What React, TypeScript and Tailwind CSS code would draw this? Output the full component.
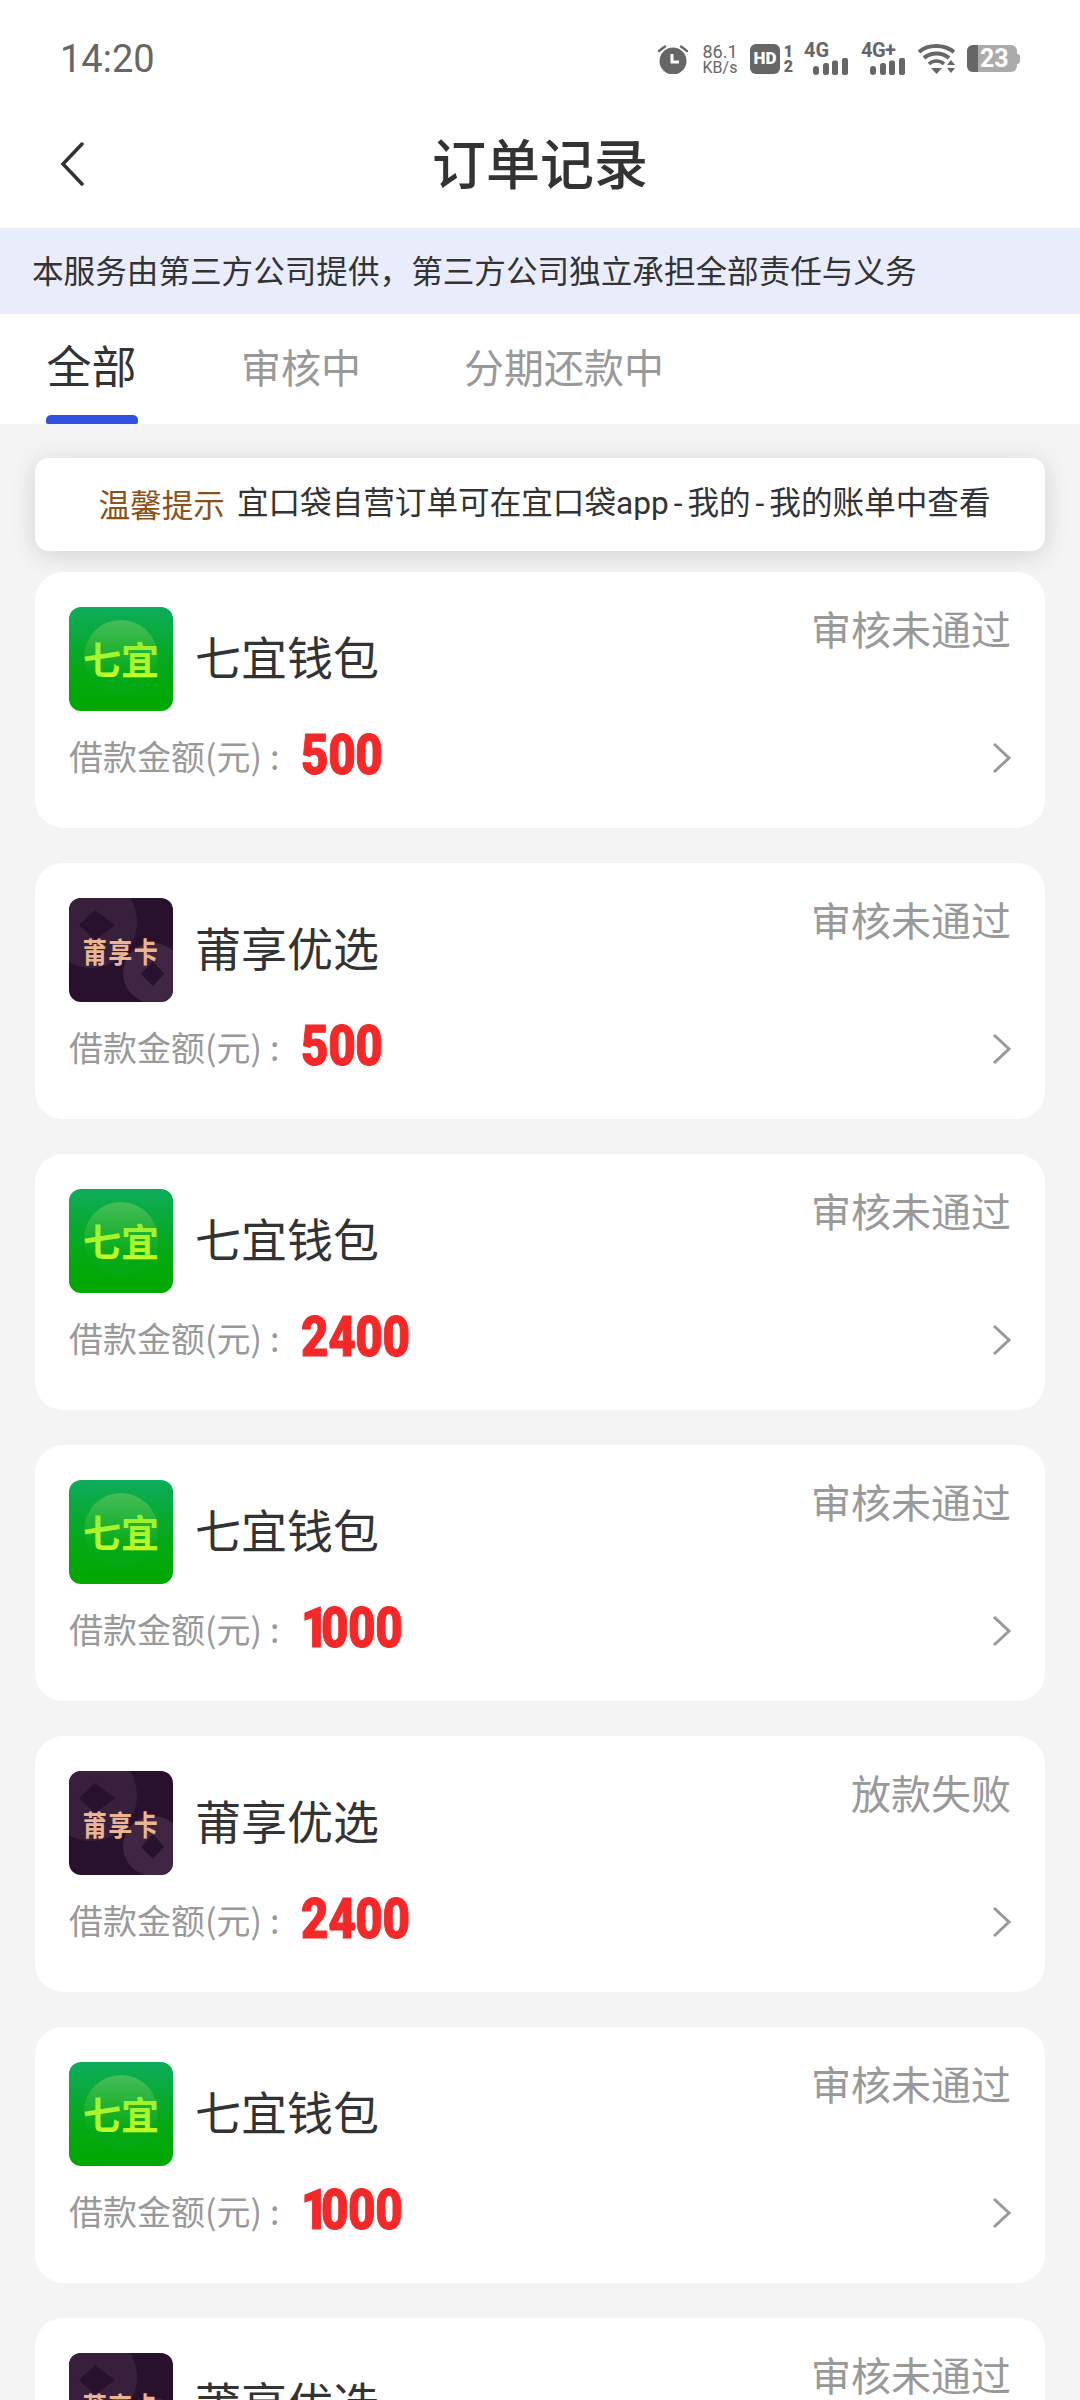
const orders = [
  { name: "七宜钱包", logo: "green", amount: "500", status: "审核未通过" },
  { name: "莆享优选", logo: "dark", amount: "500", status: "审核未通过" },
  { name: "七宜钱包", logo: "green", amount: "2400", status: "审核未通过" },
  { name: "七宜钱包", logo: "green", amount: "1000", status: "审核未通过" },
  { name: "莆享优选", logo: "dark", amount: "2400", status: "放款失败" },
  { name: "七宜钱包", logo: "green", amount: "1000", status: "审核未通过" },
  { name: "莆享优选", logo: "dark", amount: "1000", status: "审核未通过" },
];

function GreenLogo() {
  return (
    <svg width="104" height="104" viewBox="0 0 104 104" className="shrink-0">
      <defs>
        <linearGradient id="greenBg" x1="0" y1="0" x2="0" y2="1">
          <stop offset="0" stopColor="#0dac5c" />
          <stop offset="0.6" stopColor="#04a914" />
          <stop offset="1" stopColor="#00a800" />
        </linearGradient>
        <linearGradient id="greenCircle" x1="0" y1="0" x2="0" y2="1">
          <stop offset="0" stopColor="#45bd5a" />
          <stop offset="0.75" stopColor="#04a914" />
        </linearGradient>
        <linearGradient id="greenText" x1="0" y1="0" x2="0" y2="1">
          <stop offset="0" stopColor="#86ec34" />
          <stop offset="1" stopColor="#ccff22" />
        </linearGradient>
      </defs>
      <rect width="104" height="104" rx="12" fill="url(#greenBg)" />
      <circle cx="52" cy="50" r="37" fill="url(#greenCircle)" />
      <text x="52" y="67" textAnchor="middle" fontSize="38" fontWeight="700" fill="url(#greenText)" fontFamily="'Noto Sans CJK SC', sans-serif">
        七宜
      </text>
    </svg>
  );
}

function DarkLogo() {
  return (
    <svg width="104" height="104" viewBox="0 0 104 104" className="shrink-0">
      <defs>
        <clipPath id="darkClip">
          <rect width="104" height="104" rx="12" />
        </clipPath>
      </defs>
      <g clipPath="url(#darkClip)">
        <rect width="104" height="104" fill="#28112c" />
        <circle cx="22" cy="24" r="46" fill="#38203c" />
        <circle cx="84" cy="75" r="30" fill="#3f2642" />
        <path d="M26 12 L46 27 L26 42 L10 27 Z" fill="#28112c" />
        <path d="M84 63 L95 76 L84 88 L72 76 Z" fill="#28112c" />
      </g>
      <text transform="translate(52 65) scale(1 1.2)" textAnchor="middle" fontSize="24" letterSpacing="1.5" fontWeight="700" fill="#eab592" fontFamily="'Noto Sans CJK SC', sans-serif">
        莆享卡
      </text>
    </svg>
  );
}

function Bars() {
  return (
    <svg width="35" height="17" viewBox="0 0 35 17" fill="#666">
      <rect x="0" y="8" width="6" height="9" rx="3" />
      <rect x="10" y="5" width="6" height="12" rx="2.5" />
      <rect x="19" y="2.5" width="6" height="14.5" rx="2" />
      <rect x="29" y="0" width="6" height="17" rx="2" />
    </svg>
  );
}

function StatusBar() {
  return (
    <div className="flex h-[114px] items-center justify-between pt-[3px] pr-[60px] pl-[60px]">
      <span className="mt-[1px] font-['Roboto'] text-[38px] leading-none text-[#666666]">14:20</span>
      <div className="flex items-center text-[#666666]">
        <svg width="32" height="30" viewBox="0 0 32 30">
          <circle cx="16" cy="17" r="13.5" fill="#666" />
          <path d="M2 7 L8 2.5 M30 7 L24 2.5" stroke="#666" strokeWidth="2.5" strokeLinecap="round" />
          <path d="M15 10 V18 H22" stroke="#fff" strokeWidth="3" fill="none" />
        </svg>
        <div className="ml-[12px] flex w-[38px] flex-col items-center font-['Roboto'] leading-none">
          <span className="text-[18px] leading-[17px]">86.1</span>
          <span className="text-[16px] leading-[15px]">KB/s</span>
        </div>
        <div className="ml-[11px] flex h-[30px] w-[30px] items-center justify-center rounded-[6px] bg-[#666666] font-['Roboto'] text-[17px] font-black text-white">
          HD
        </div>
        <div className="ml-[3px] flex w-[11px] flex-col items-center font-['Roboto'] text-[16px] leading-[15px] font-black">
          <span>1</span>
          <span>2</span>
        </div>
        <div className="ml-[10px] flex w-[44px] flex-col">
          <span className="font-['Roboto'] text-[20px] leading-[15px] font-bold">4G</span>
          <div className="ml-[9px] flex">
            <Bars />
          </div>
        </div>
        <div className="ml-[13px] flex w-[44px] flex-col">
          <span className="font-['Roboto'] text-[20px] leading-[15px] font-bold tracking-[-0.5px]">4G+</span>
          <div className="ml-[9px] flex">
            <Bars />
          </div>
        </div>
        <svg width="38" height="30" viewBox="0 0 38 30" className="ml-[13px]">
          <path d="M1 8 C10 0 26 0 36 8" stroke="#666" strokeWidth="4" fill="none" />
          <path d="M6 14 C13 8 24 8 31 14" stroke="#666" strokeWidth="4" fill="none" />
          <path d="M11 20 C15 16 22 16 26 20" stroke="#666" strokeWidth="3.5" fill="none" />
          <path d="M13 24 H24 L18.5 30 Z" fill="#666" />
          <path d="M33 16 L37 21 H29 Z M29 24 H37 L33 29 Z" fill="#666" />
        </svg>
        <div className="ml-[11px] flex items-center">
          <div className="flex h-[27px] w-[50px] overflow-hidden rounded-[6px] bg-[#ababab]">
            <div className="h-full w-[11px] bg-[#666666]" />
            <span className="ml-[2px] font-['Roboto'] text-[25px] leading-[27px] font-bold text-white">23</span>
          </div>
          <div className="h-[10px] w-[3px] rounded-r-sm bg-[#ababab]" />
        </div>
      </div>
    </div>
  );
}

function Header() {
  return (
    <div className="relative flex h-[114px] items-center justify-center pb-[18px]">
      <svg width="28" height="44" viewBox="0 0 28 44" className="absolute top-[28px] left-[58px]">
        <path d="M24 2 L5 22 L24 42" stroke="#333" strokeWidth="3.5" fill="none" strokeLinecap="round" />
      </svg>
      <h1 className="text-[54px] leading-none font-medium text-[#333333]">订单记录</h1>
    </div>
  );
}

function Amount({ value }: { value: string }) {
  return (
    <span className="mb-[3px] origin-left scale-x-[0.85] font-['Roboto'] text-[56px] leading-none font-black tracking-[-0.5px] text-[#f42828] [-webkit-text-stroke:1px_#f42828]">
      {value[0] === "1" ? <span className="tracking-[-9px]">1</span> : value[0]}
      {value.slice(1)}
    </span>
  );
}

function OrderCard({ name, logo, amount, status }: { name: string; logo: string; amount: string; status: string }) {
  return (
    <div className="flex h-[256px] shrink-0 justify-between rounded-[28px] bg-white pt-[35px] pr-[34px] pl-[34px]">
      <div className="flex flex-col">
        <div className="flex h-[104px] items-center gap-[22px]">
          {logo === "green" ? <GreenLogo /> : <DarkLogo />}
          <span className="mb-[9px] text-[46px] leading-none text-[#333333]">{name}</span>
        </div>
        <div className="mt-[16px] flex h-[58px] items-center">
          <span className="text-[34px] leading-none text-[#999999]">借款金额</span>
          <span className="text-[34px] leading-none text-[#999999]">(元)</span>
          <span className="ml-[8px] w-[31px] text-[34px] leading-none text-[#999999]">:</span>
          <Amount value={amount} />
        </div>
      </div>
      <div className="flex flex-col items-end">
        <span className="-mt-[4px] text-[40px] leading-[50px] text-[#999999]">{status}</span>
        <svg width="20" height="32" viewBox="0 0 20 32" className="mt-[89px] mr-[-1px]">
          <path d="M2 2 L17 16 L2 30" stroke="#999" strokeWidth="3" fill="none" />
        </svg>
      </div>
    </div>
  );
}

export default function App() {
  return (
    <div className="h-[2400px] w-[1080px] overflow-hidden bg-[#f4f4f4] font-['Noto_Sans_CJK_SC',sans-serif]">
      <div className="bg-white">
        <StatusBar />
        <Header />
        <div className="flex h-[86px] items-center bg-[#e9edfb] pb-[2px] pl-[32px] text-[31.6px] leading-none text-[#333333]">
          本服务由第三方公司提供，第三方公司独立承担全部责任与义务
        </div>
        <div className="flex h-[110px] gap-[103px] pl-[45px]">
          <div className="flex flex-col items-center">
            <span className="mt-[25px] text-[45px] leading-[52px] text-[#333333]">全部</span>
            <div className="mt-auto ml-[1px] h-[9px] w-[92px] rounded-t-[5px] rounded-b-[2px] bg-[#3050e0]" />
          </div>
          <span className="mt-[27px] text-[40px] leading-[50px] text-[#999999]">审核中</span>
          <span className="mt-[27px] text-[40px] leading-[50px] text-[#999999]">分期还款中</span>
        </div>
      </div>
      <div className="flex flex-col px-[35px] pt-[34px]">
        <div className="flex h-[93px] items-center justify-center gap-[12px] rounded-[14px] bg-white pb-[2px] pl-[9px] text-[31.6px] leading-none shadow-[0_4px_26px_rgba(0,0,0,0.14)]">
          <span className="text-[#8c5018]">温馨提示</span>
          <span className="font-['Roboto','Noto_Sans_CJK_SC',sans-serif] text-[#333333]">
            宜口袋自营订单可在宜口袋app<span className="mx-[5px]">-</span>我的<span className="mx-[5px]">-</span>我的账单中查看
          </span>
        </div>
        <div className="mt-[21px] flex flex-col gap-[35px]">
          {orders.map((o, i) => (
            <OrderCard key={i} {...o} />
          ))}
        </div>
      </div>
    </div>
  );
}
